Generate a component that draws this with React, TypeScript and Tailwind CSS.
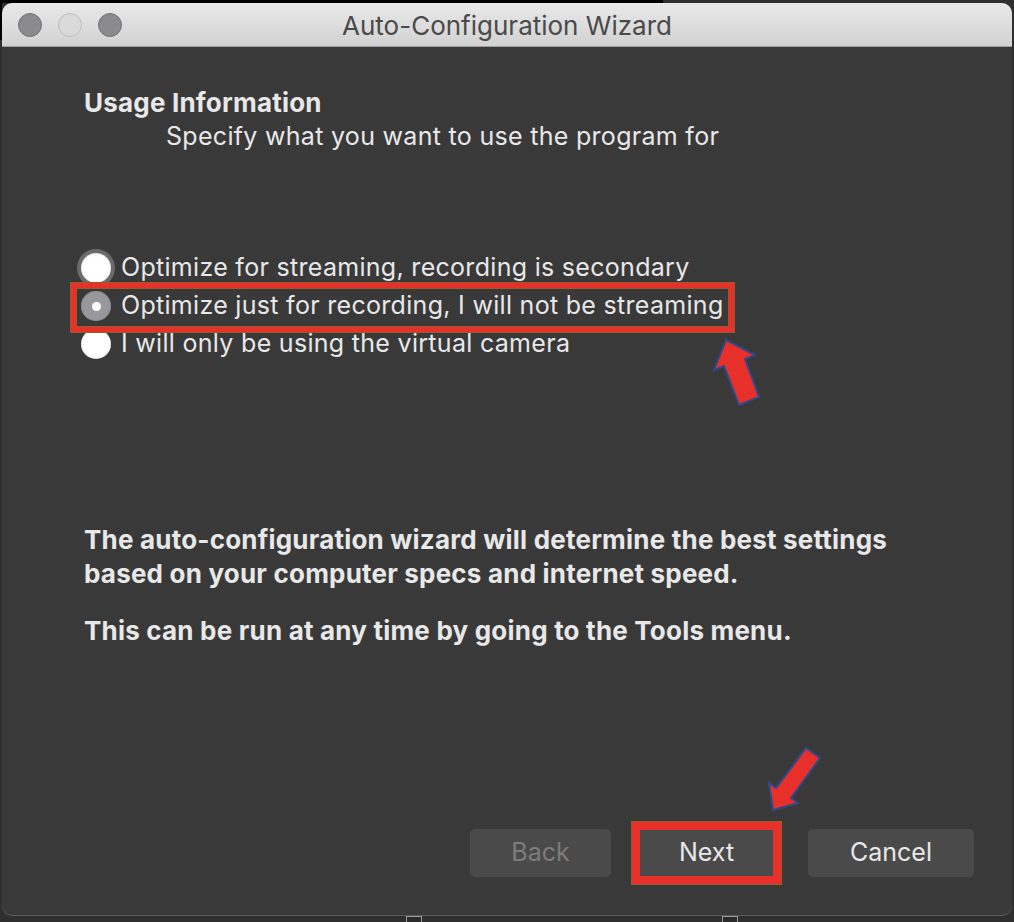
import React from "react";

const font = { fontFamily: "Inter, 'Noto Sans', sans-serif" };

function Radio({ state }: { state: "focus" | "selected" | "plain" }) {
  if (state === "selected") {
    return (
      <div className="w-[30px] h-[30px] rounded-full bg-[#98989c] flex items-center justify-center shadow-[inset_0_0_0_1px_#8a8a8e]">
        <div className="w-[9px] h-[9px] rounded-full bg-white" />
      </div>
    );
  }
  if (state === "focus") {
    return (
      <div className="w-[30px] h-[30px] rounded-full bg-white shadow-[0_0_0_4px_#6b6b6d,inset_0_0_2px_#bbb]" />
    );
  }
  return <div className="w-[30px] h-[30px] rounded-full bg-white shadow-[inset_0_0_2px_#bbb]" />;
}

export default function App() {
  return (
    <div className="relative w-[1014px] h-[922px] bg-[#2f2f2f] overflow-hidden" style={font}>
      <div className="absolute left-0 top-0 w-[663px] h-[3px] bg-black" />
      <div className="absolute left-0 top-0 w-[2px] h-[40px] bg-black" />
      <div className="absolute left-[406px] top-[916px] w-[16px] h-[8px] border border-[#9a9a9a] bg-[#2a2a2a]" />
      <div className="absolute left-[722px] top-[916px] w-[16px] h-[8px] border border-[#9a9a9a] bg-[#2a2a2a]" />

      <div className="absolute left-[2px] top-[3px] w-[1010px] h-[913px] rounded-[10px] overflow-hidden bg-[#393939] flex flex-col shadow-[inset_0_-1px_0_#5a5a5a]">
        {/* Title bar */}
        <div className="relative h-[44px] shrink-0 bg-gradient-to-b from-[#e9e9e9] to-[#d2d2d2] border-b border-[#9e9e9e] flex items-center justify-center">
          <div className="absolute left-[16px] top-[10px] flex gap-[16px]">
            <div className="w-[24px] h-[24px] rounded-full bg-[#8b8b8d] border border-[#747476]" />
            <div className="w-[24px] h-[24px] rounded-full bg-[#dadada] border border-[#bdbdbd]" />
            <div className="w-[24px] h-[24px] rounded-full bg-[#8b8b8d] border border-[#747476]" />
          </div>
          <span className="text-[26px] leading-[32px] text-[#4a4a4a] mt-[2px]">Auto-Configuration Wizard</span>
        </div>

        {/* Body */}
        <div className="flex flex-col pl-[82px] pt-[40px] text-[#e8e8e8] text-[25px] tracking-[0.3px]">
          <div className="font-bold leading-[32px] text-[26px] tracking-[0.2px]">Usage Information</div>
          <div className="leading-[32px] mt-[1px] pl-[82px]">Specify what you want to use the program for</div>

          <div className="mt-[97px] flex flex-col -ml-[3px]">
            <div className="flex items-center h-[38px] gap-[10px]">
              <Radio state="focus" />
              <span>Optimize for streaming, recording is secondary</span>
            </div>
            <div className="relative flex items-center h-[38px] gap-[10px]">
              <div className="absolute -left-[10px] -top-[4px] w-[663px] h-[49px] border-[5px] border-[#e8302a] outline outline-1 outline-[#9a5a2a] shadow-[inset_0_0_0_1px_#9a5a2a]" />
              <Radio state="selected" />
              <span>Optimize just for recording, I will not be streaming</span>
            </div>
            <div className="flex items-center h-[38px] gap-[10px]">
              <Radio state="plain" />
              <span>I will only be using the virtual camera</span>
            </div>
          </div>

          <div className="mt-[160px] font-bold leading-[34px] text-[26px] tracking-[0.2px]">
            The auto-configuration wizard will determine the best settings
            <br />
            based on your computer specs and internet speed.
          </div>
          <div className="mt-[23px] font-bold leading-[34px] text-[26px] tracking-[0.2px]">
            This can be run at any time by going to the Tools menu.
          </div>
        </div>

        <div className="mt-auto mb-[32px] flex items-center justify-end pr-[38px] text-[25px]">
          <div className="w-[141px] h-[48px] rounded-[5px] bg-[#4a4a4a] flex items-center justify-center text-[#7c7c7c]">Back</div>
          <div className="ml-[21px] border-[8px] border-[#e8302a] outline outline-1 outline-[#9a5a2a] shadow-[inset_0_0_0_1px_#9a5a2a]">
            <div className="w-[133px] h-[46px] bg-[#4a4a4a] flex items-center justify-center text-[#e8e8e8]">Next</div>
          </div>
          <div className="ml-[27px] w-[166px] h-[48px] rounded-[5px] bg-[#4a4a4a] flex items-center justify-center text-[#e8e8e8]">Cancel</div>
        </div>
      </div>

      <svg className="absolute inset-0 pointer-events-none" width="1014" height="922" viewBox="0 0 1014 922">
        <polygon points="726,340 755,355 745,359 759,397 739,405 724,366 714,370" fill="#e8302a" stroke="#2f4a8a" strokeWidth="2" strokeLinejoin="miter" />
        <polygon points="773,810 769,783 776,788 806,748 820,758 791,798 798,803" fill="#e8302a" stroke="#2f4a8a" strokeWidth="2" strokeLinejoin="miter" />
      </svg>
    </div>
  );
}
